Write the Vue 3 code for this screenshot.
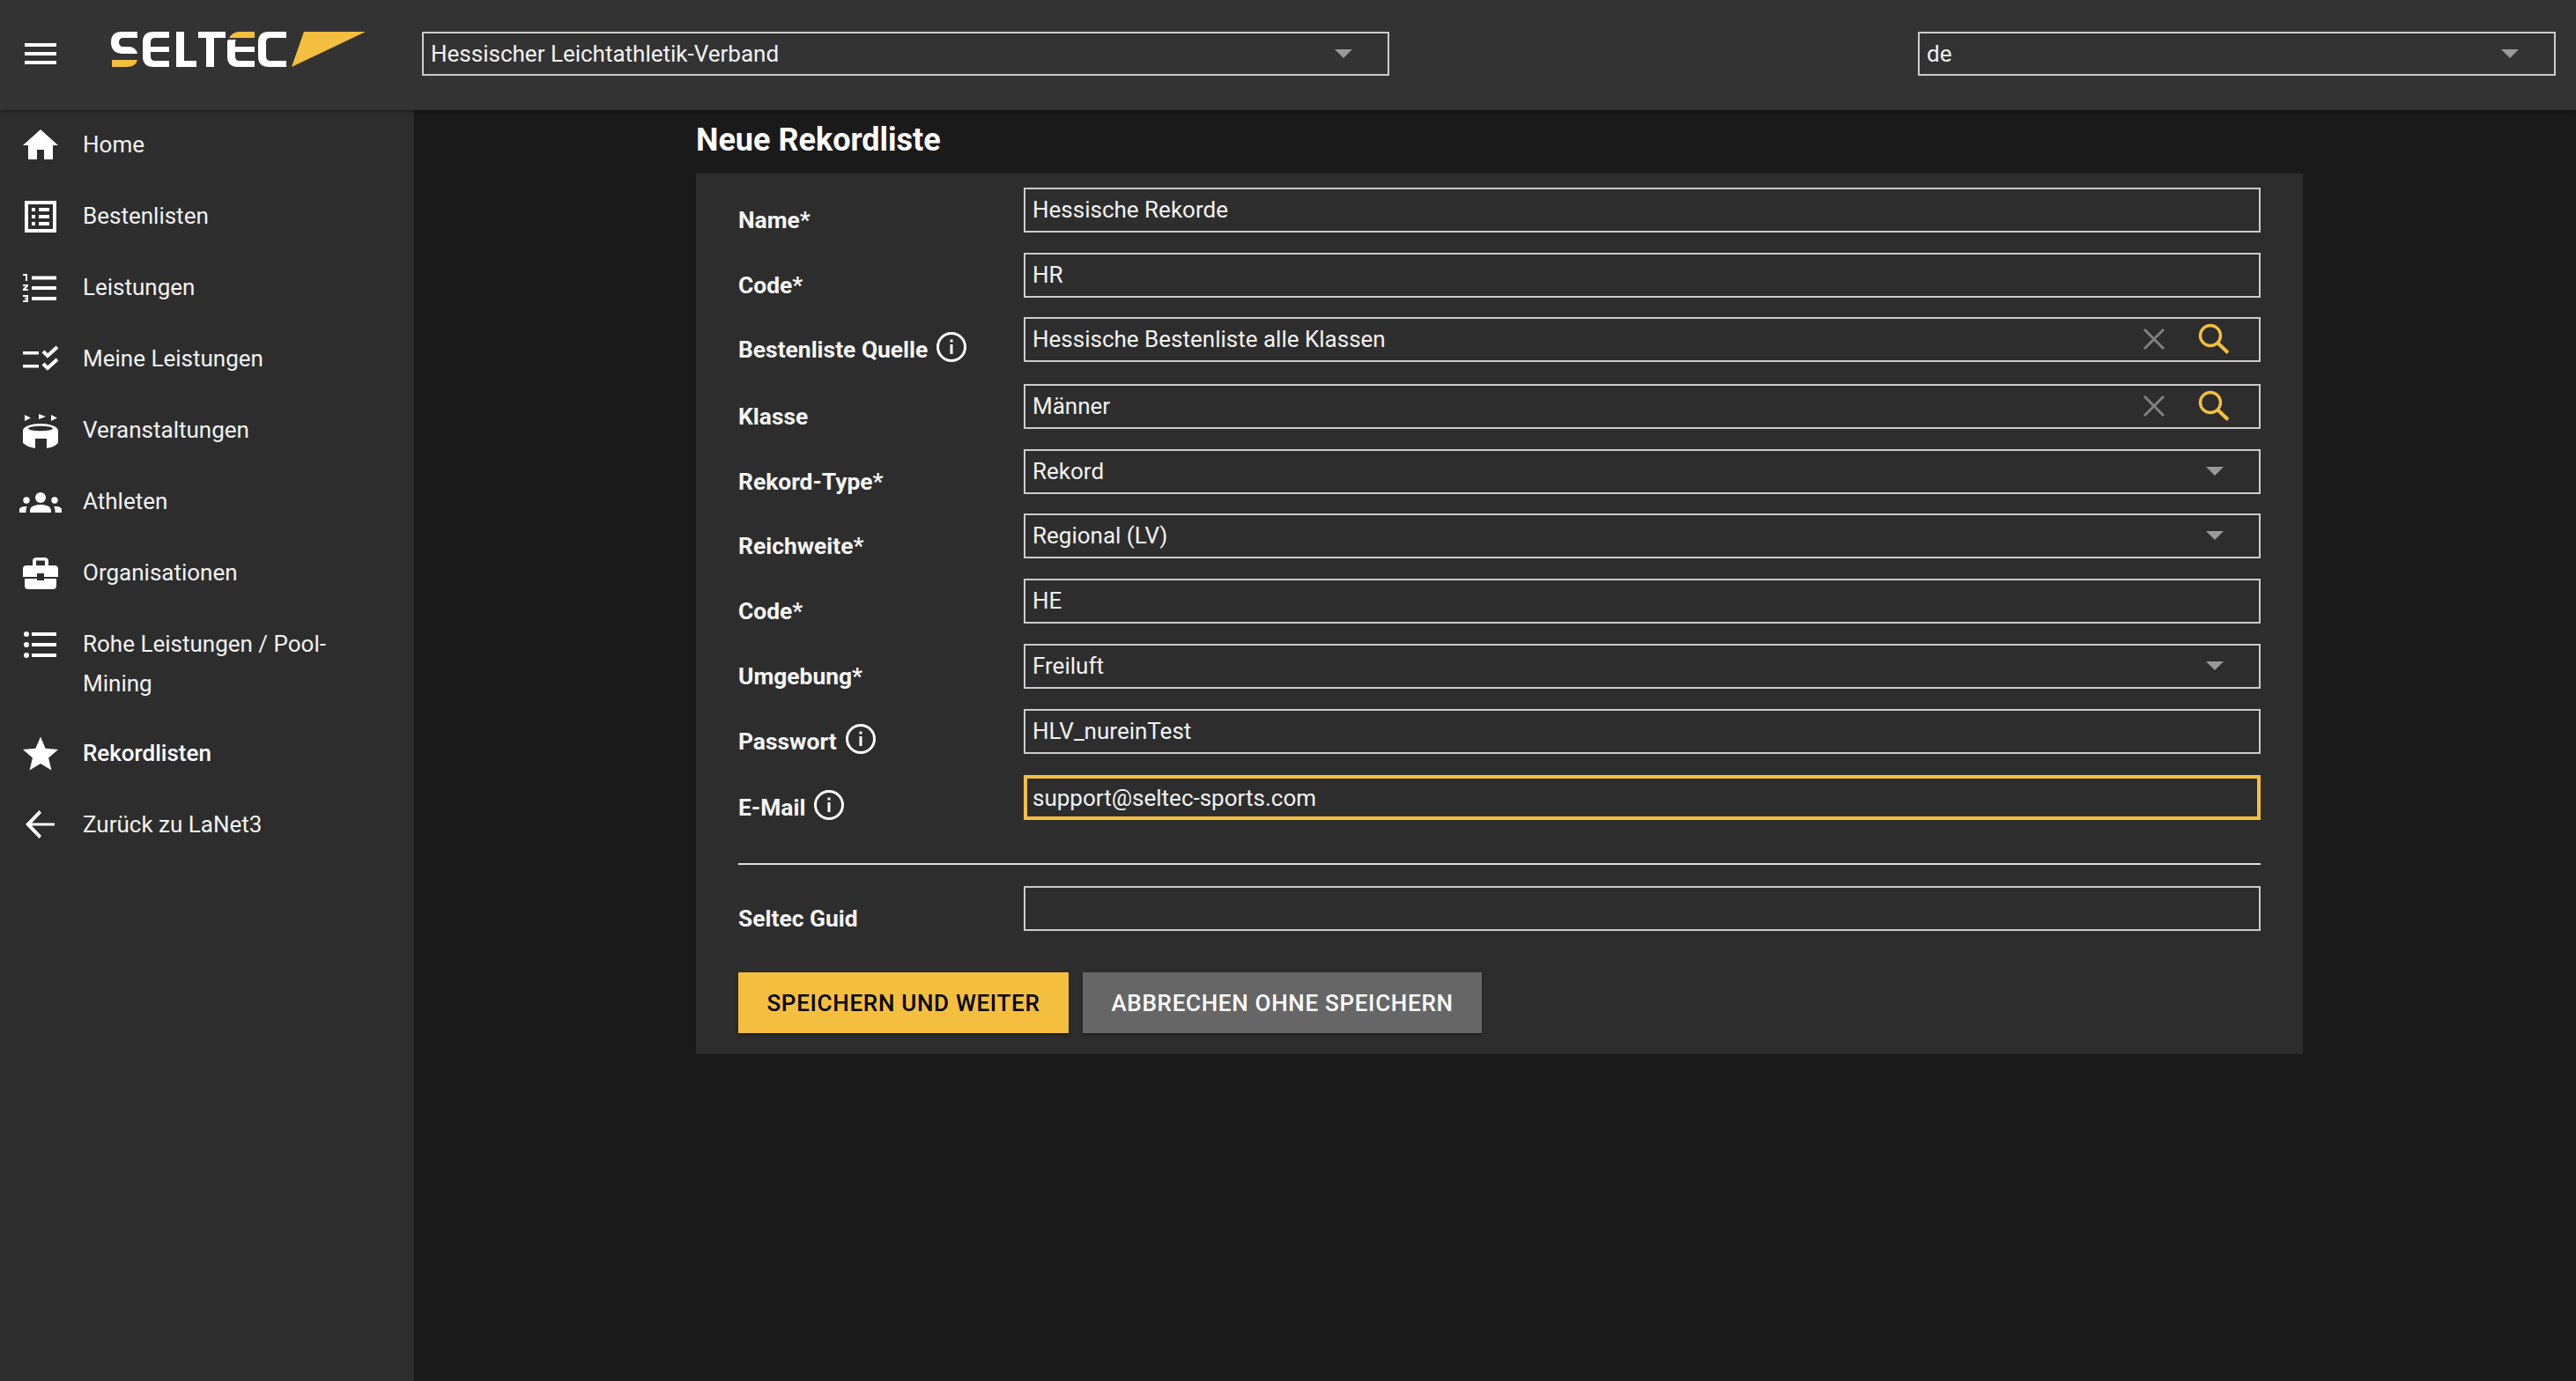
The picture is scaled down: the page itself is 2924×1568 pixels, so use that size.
<script setup>
const nav = [
  { label: 'Home', icon: 'home' },
  { label: 'Bestenlisten', icon: 'list-box' },
  { label: 'Leistungen', icon: 'numbered' },
  { label: 'Meine Leistungen', icon: 'checks' },
  { label: 'Veranstaltungen', icon: 'stadium' },
  { label: 'Athleten', icon: 'people' },
  { label: 'Organisationen', icon: 'case' },
  { label: 'Rohe Leistungen / Pool-Mining', icon: 'bullets' },
  { label: 'Rekordlisten', icon: 'star', active: true },
  { label: 'Zurück zu LaNet3', icon: 'back' },
]
const rows = [
  { label: 'Name*', value: 'Hessische Rekorde', cls: 'r74' },
  { label: 'Code*', value: 'HR', cls: 'r73' },
  { label: 'Bestenliste Quelle', value: 'Hessische Bestenliste alle Klassen', info: true, kind: 'auto', cls: 'r76' },
  { label: 'Klasse', value: 'Männer', kind: 'auto', cls: 'r74' },
  { label: 'Rekord-Type*', value: 'Rekord', kind: 'select', cls: 'r73' },
  { label: 'Reichweite*', value: 'Regional (LV)', kind: 'select', cls: 'r74' },
  { label: 'Code*', value: 'HE', cls: 'r74' },
  { label: 'Umgebung*', value: 'Freiluft', kind: 'select', cls: 'r74' },
  { label: 'Passwort', value: 'HLV_nureinTest', info: true, cls: 'r75' },
  { label: 'E-Mail', value: 'support@seltec-sports.com', info: true, focus: true, cls: 'r74' },
]
</script>

<template>
  <div class="page">
    <header class="top">
      <svg class="burger" viewBox="0 0 36 24" width="36" height="24"><path d="M0 0h36v4H0zM0 10h36v4H0zM0 20h36v4H0z" fill="#fff"/></svg>
      <svg class="logo" viewBox="0 0 290 40" width="290" height="40">
        <path d="M30 0H12Q0 0 0 12Q0 24 12 25H30Q28 17 20 17H14Q9 17 9 12Q9 7 14 7H30Z" fill="#fff"/>
        <path d="M1 32H30Q28 40 18 40H1Z" fill="#f4bf3e"/>
        <path d="M66 0H48Q36 0 36 12V28Q36 40 48 40H66V33H50Q45 33 45 28V23H66V17H45V12Q45 7 50 7H66Z" fill="#fff"/>
        <path d="M74 0H83V33H97V40H74Z" fill="#fff"/>
        <path d="M99 0H130V7H117V40H108V7H99Z" fill="#fff"/>
        <path d="M163 0H146Q138 0 134 7H163Z" fill="#f4bf3e"/>
        <path d="M133 9Q132 10 132 12V28Q132 40 144 40H163V33H146Q141 33 141 28V23H163V17H141V12Q141 10 142 9Z" fill="#fff"/>
        <path d="M199 0H179Q167 0 167 12V28Q167 40 179 40H199V33H181Q176 33 176 28V12Q176 7 181 7H199Z" fill="#fff"/>
        <path d="M205 40L219 0H289Z" fill="#f4bf3e"/>
      </svg>
      <div class="top-select org">
        <span>Hessischer Leichtathletik-Verband</span>
        <i class="caret"></i>
      </div>
      <div class="top-select lang">
        <span>de</span>
        <i class="caret"></i>
      </div>
    </header>
    <div class="body">
      <aside class="side">
        <a v-for="item in nav" :key="item.label" class="nav" :class="{ active: item.active }">
          <span class="ico">
            <svg viewBox="0 0 48 48" width="48" height="48" fill="#fff">
              <path v-if="item.icon === 'home'" d="M20 40V29h8v11h10V24h6L24 6 4 24h6v16z"/>
              <g v-else-if="item.icon === 'list-box'">
                <path fill-rule="evenodd" d="M6 6h36v36H6zM10 10v28h28V10z"/>
                <path d="M14 14h4v4h-4zM14 22h4v4h-4zM14 30h4v4h-4zM22 14h12v4H22zM22 22h12v4H22zM22 30h12v4H22z"/>
              </g>
              <g v-else-if="item.icon === 'numbered'">
                <path d="M14 10.500h28v4H14zM14 22h28v4H14zM14 34h28v4H14z"/>
                <path d="M4 8h5v8H7v-6H4zM4 20h6v2l-3 3h3v2H4v-2l3-3H4zM4 32h6v8H4v-2h4v-1H6v-2h2v-1H4z"/>
              </g>
              <g v-else-if="item.icon === 'checks'">
                <path d="M4 15h18v3.500H4zM4 30h18v3.500H4z"/>
                <path d="M27 15l5 5 11-10M27 29l5 5 11-10" fill="none" stroke="#fff" stroke-width="4"/>
              </g>
              <g v-else-if="item.icon === 'stadium'">
                <path d="M6 6l7 3.500-7 3.500zM22 5l8 3-8 3zM36 6l7 3.500-7 3.500z"/>
                <path fill-rule="evenodd" d="M4 24C4 19 14 16 24 16s20 3 20 8v14c-4 4-8 5-13 6V33H18v11c-5-1-9-2-14-6zM10 21.500c0 1.500 6 2.800 14 2.800s14-1.300 14-2.800-6-2.800-14-2.800-14 1.300-14 2.800z"/>
              </g>
              <g v-else-if="item.icon === 'people'">
                <circle cx="24" cy="19" r="6"/><circle cx="8" cy="22" r="3.700"/><circle cx="40" cy="22" r="3.700"/>
                <path d="M12 36v-2c0-5 5-7 12-7s12 2 12 7v2zM0 36v-3c0-3 3-4 7-4h2c-1 1-1.500 3-1.500 5v2zM48 36v-3c0-3-3-4-7-4h-2c1 1 1.500 3 1.500 5v2z"/>
              </g>
              <g v-else-if="item.icon === 'case'">
                <path fill-rule="evenodd" d="M15 15V10c0-3 2-4 4-4h10c2 0 4 1 4 4v5h7c3 0 4 2 4 4v9H28v-4h-8v4H4v-9c0-2 1-4 4-4zM19 15h10V9.500H19z"/>
                <path d="M6 30h14v2h8v-2h14v8c0 3-2 4-4 4H10c-2 0-4-1-4-4z"/>
              </g>
              <g v-else-if="item.icon === 'bullets'">
                <circle cx="8" cy="12" r="3"/><circle cx="8" cy="24" r="3"/><circle cx="8" cy="36" r="3"/>
                <path d="M14 10h28v4H14zM14 22h28v4H14zM14 34h28v4H14z"/>
              </g>
              <path v-else-if="item.icon === 'star'" d="M24 35l12.400 7.500-3.300-14.100L44 19l-14.400-1.200L24 4.500l-5.600 13.300L4 19l10.900 9.400-3.300 14.100z"/>
              <path v-else-if="item.icon === 'back'" d="M40 21.500H14L25 10l-2.500-3L7 23l15.500 16 2.500-3-11-11.500h26z"/>
            </svg>
          </span>
          <span class="nav-text">{{ item.label }}</span>
        </a>
      </aside>
      <main class="main">
        <h1>Neue Rekordliste</h1>
        <section class="panel">
          <div v-for="(row, i) in rows" :key="i" class="row" :class="row.cls">
            <label>
              {{ row.label }}
              <svg v-if="row.info" class="info" viewBox="0 0 34 34" width="34" height="34">
                <circle cx="17" cy="17" r="15.500" fill="none" stroke="#fff" stroke-width="3"/>
                <path d="M15.500 14h3v11h-3zM15.500 8.500h3v3h-3z" fill="#fff"/>
              </svg>
            </label>
            <div class="field" :class="{ focus: row.focus }">
              <span class="val">{{ row.value }}</span>
              <template v-if="row.kind === 'auto'">
                <svg class="x" viewBox="0 0 24 24" width="24" height="24"><path d="M1 1l22 22M23 1L1 23" stroke="#808080" stroke-width="3" fill="none"/></svg>
                <svg class="mag" viewBox="0 0 36 36" width="36" height="36">
                  <circle cx="14" cy="14" r="11.500" fill="none" stroke="#f4bf3e" stroke-width="3.400"/>
                  <path d="M22.500 22.500L34 33.500" stroke="#f4bf3e" stroke-width="4" fill="none"/>
                </svg>
              </template>
              <i v-else-if="row.kind === 'select'" class="caret sel"></i>
            </div>
          </div>
          <hr />
          <div class="row guid">
            <label>Seltec Guid</label>
            <div class="field"></div>
          </div>
          <div class="actions">
            <button class="btn primary">SPEICHERN UND WEITER</button>
            <button class="btn second">ABBRECHEN OHNE SPEICHERN</button>
          </div>
        </section>
      </main>
    </div>
  </div>
</template>

<style>
html, body { margin: 0; background: #1a1a1a; }
</style>

<style scoped>
.page { width: 2924px; height: 1568px; display: flex; flex-direction: column; overflow: hidden; font-family: Roboto, sans-serif; color: #fff; background: #1a1a1a; }
.top { height: 125px; flex: none; display: flex; align-items: center; background: #333; box-shadow: 0 1px 4px rgba(0,0,0,.5); position: relative; z-index: 2; box-sizing: border-box; padding-bottom: 1px; }
.burger { margin-left: 28px; margin-top: -2px; }
.logo { margin-left: 62px; margin-top: -12px; }
.top-select { height: 50px; box-sizing: border-box; border: 2px solid #ccc; display: flex; align-items: center; justify-content: space-between; padding-left: 8px; font-size: 26px; margin-top: -2px; color: #f2f2f2; }
.org { width: 1098px; margin-left: 63px; padding-right: 40px; }
.lang { width: 724px; margin-left: 600px; padding-right: 40px; }
.caret { width: 0; height: 0; border-left: 10px solid transparent; border-right: 10px solid transparent; border-top: 10px solid #999; }
.body { flex: 1; display: flex; min-height: 0; }
.side { width: 470px; flex: none; background: #2d2d2d; padding-top: 4px; box-sizing: border-box; }
.nav { display: flex; align-items: flex-start; padding: 13px 0 21px 22px; line-height: 45px; font-size: 26px; color: #f2f2f2; min-height: 80px; box-sizing: border-box; }
.nav.active { font-weight: 500; color: #fff; }
.ico { width: 72px; height: 48px; flex: none; margin-top: -1px; display: block; }
.nav-text { width: 300px; }
.main { flex: 1; padding-left: 320px; }
h1 { margin: 0; font-size: 36px; font-weight: 700; line-height: 68px; height: 72px; }
.panel { width: 1824px; height: 1000px; background: #2d2d2d; box-sizing: border-box; padding: 16px 48px 0; }
.row { display: flex; align-items: flex-start; }
.r73 { height: 73px; }
.r74 { height: 74px; }
.r75 { height: 75px; }
.r76 { height: 76px; }
label { width: 324px; flex: none; font-size: 26.4px; font-weight: 700; display: flex; align-items: center; gap: 10px; height: 51px; padding-top: 11px; color: #f6f6f6; }
.info { flex: none; margin-top: -6px; }
.field { flex: 1; height: 51px; box-sizing: border-box; border: 2px solid #ccc; display: flex; align-items: center; padding: 0 8px 1px; font-size: 26px; color: #f2f2f2; }
.field.focus { border: 4px solid #f4bf3e; padding: 0 6px; }
.val { flex: 1; }
.x { margin-right: 38px; }
.mag { margin-right: 25px; }
.sel { margin-right: 32px; }
hr { height: 2px; border: 0; background: #e0e0e0; margin: 26px 0 24px; }
.row.guid { height: 98px; }
.actions { display: flex; gap: 16px; }
.btn { height: 69px; border: 0; font-family: Roboto, sans-serif; font-size: 26px; font-weight: 500; letter-spacing: 0.7px; box-shadow: 0 2px 4px rgba(0,0,0,.4); padding: 0; }
.primary { width: 375px; background: #f4bf3e; color: #000; }
.second { width: 453px; background: #666; color: #fff; }
</style>
